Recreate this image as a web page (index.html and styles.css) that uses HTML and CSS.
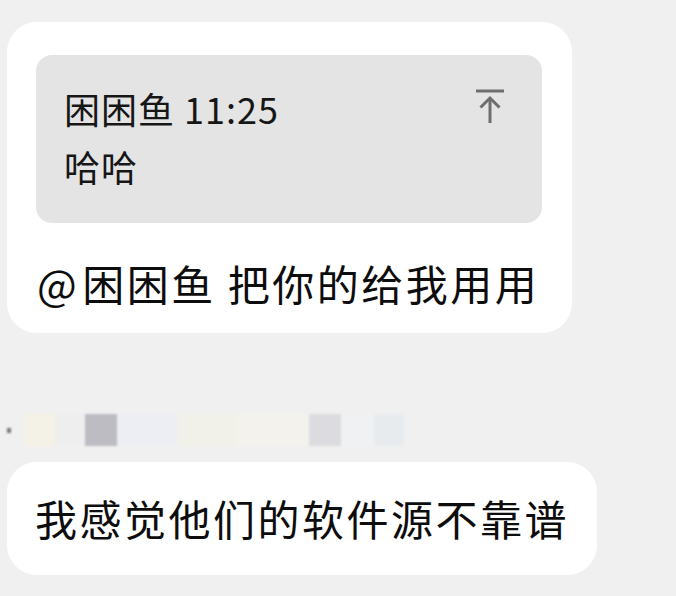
FILE: index.html
```html
<!DOCTYPE html>
<html lang="zh-CN">
<head>
    <meta charset="UTF-8">
    <meta name="viewport" content="width=device-width, initial-scale=1.0">
    <title>聊天记录</title>
    <link rel="stylesheet" href="styles.css">
</head>
<body>
    <!-- 引用回复的消息 -->
    <div class="bubble bubble-quote">
        <div class="quote">
            <div class="quote-head">
                <span class="quote-title">困困鱼 11:25</span>
                <svg class="quote-icon" width="30" height="36" viewBox="0 0 30 36">
                    <line x1="1" y1="3" x2="29" y2="3" stroke="#6e6e6e" stroke-width="3"/>
                    <line x1="15" y1="10" x2="15" y2="35" stroke="#6e6e6e" stroke-width="3"/>
                    <polyline points="5.5,19.5 15,10 24.5,19.5" fill="none" stroke="#6e6e6e" stroke-width="3"/>
                </svg>
            </div>
            <div class="quote-text">哈哈</div>
        </div>
        <div class="msg"><span class="at">@</span>困困鱼 把你的给我用用</div>
    </div>

    <!-- 模糊掉的昵称 -->
    <div class="blur-row">
        <span class="dot"></span>
        <span class="blk c1"></span>
        <span class="blk c2"></span>
        <span class="blk c3"></span>
        <span class="blk c4"></span>
        <span class="blk c5"></span>
        <span class="blk c6"></span>
        <span class="blk c7"></span>
        <span class="blk c8"></span>
        <span class="blk c9"></span>
    </div>

    <div class="bubble bubble-plain">
        <div class="msg">我感觉他们的软件源不靠谱</div>
    </div>
</body>
</html>
```

FILE: styles.css
```css
body {
    font-family: "Noto Sans CJK SC", "Noto Sans", sans-serif;
    background-color: #f0f0f0;
    color: #0d0d0d;
    margin: 0;
    padding: 22px 0 0 7px;
}

.bubble {
    background-color: #fff;
    border-radius: 30px;
    box-sizing: border-box;
}

.bubble-quote {
    width: 565px;
    padding: 33px 30px 25px 29px;
}

.bubble-plain {
    width: 590px;
    height: 113px;
    padding: 31px 28px 0 28px;
    margin-top: 15px;
}

.quote {
    background-color: #e4e4e4;
    border-radius: 16px;
    height: 168px;
    box-sizing: border-box;
    padding: 24px 37px 0 28px;
}

.quote-head {
    display: flex;
    justify-content: space-between;
    align-items: flex-start;
}

.quote-title,
.quote-text {
    font-size: 36px;
    line-height: 58px;
    letter-spacing: 1px;
    color: #161616;
}

.quote-icon {
    margin-top: 9px;
}

.msg {
    font-size: 42px;
    line-height: 50px;
    letter-spacing: 2.5px;
    white-space: nowrap;
}

.at {
    margin-right: 3px;
}

.bubble-quote .msg {
    margin-top: 35px;
    margin-left: 1px;
}

.blur-row {
    display: flex;
    align-items: center;
    height: 34px;
    margin-top: 80px;
    filter: blur(1px);
}

.dot {
    width: 4px;
    height: 5px;
    background-color: #777;
    margin-right: 14px;
}

.blk {
    height: 32px;
}

.c1 { width: 30px; background-color: #f4f1e6; }
.c2 { width: 30px; background-color: #eeeeee; }
.c3 { width: 32px; background-color: #bcbcc2; }
.c4 { width: 60px; background-color: #eceef3; }
.c5 { width: 60px; background-color: #f1f1ea; }
.c6 { width: 72px; background-color: #f3f2ec; }
.c7 { width: 32px; background-color: #dcdce0; }
.c8 { width: 33px; background-color: #f0f1f3; }
.c9 { width: 30px; background-color: #e8ebee; }
```
